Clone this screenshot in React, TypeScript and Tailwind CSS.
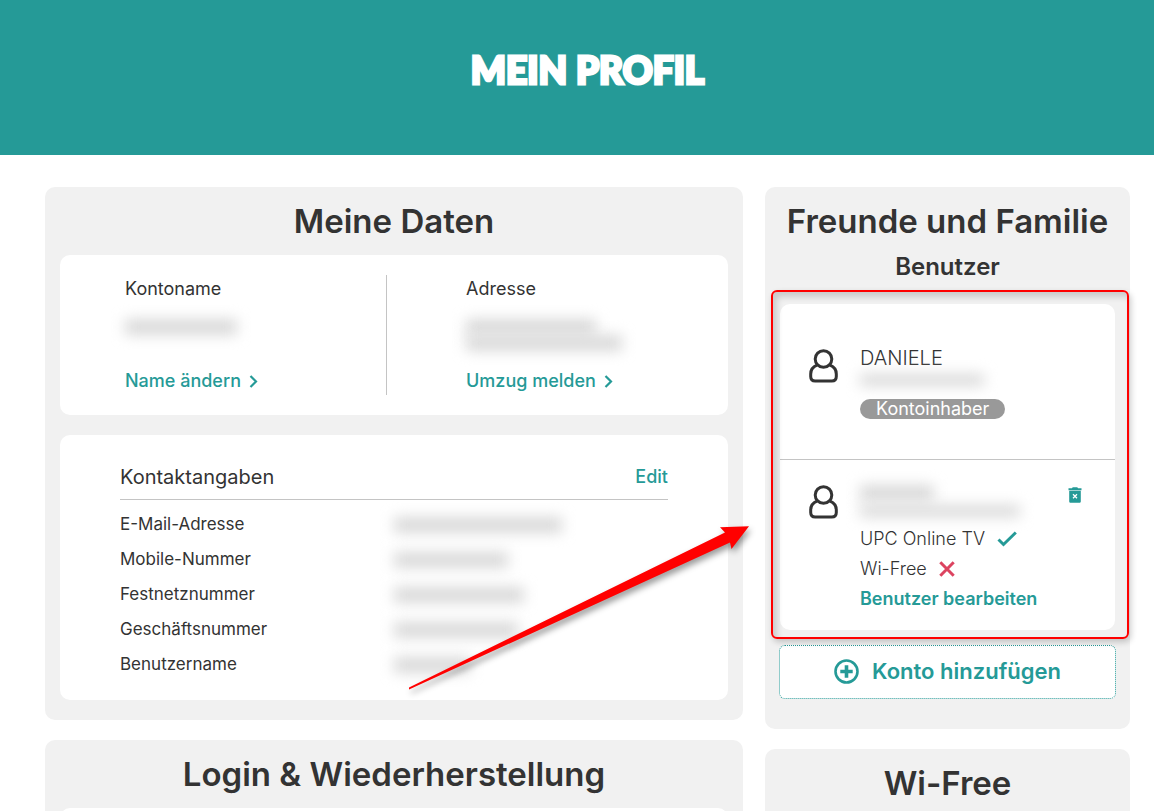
import type { ReactNode } from "react";

const contactRows = [
  { label: "E-Mail-Adresse", width: "w-[168px]" },
  { label: "Mobile-Nummer", width: "w-[114px]" },
  { label: "Festnetznummer", width: "w-[130px]" },
  { label: "Geschäftsnummer", width: "w-[124px]" },
  { label: "Benutzername", width: "w-[76px]" },
];

function Panel({ title, children }: { title: string; children?: ReactNode }) {
  return (
    <section className="relative rounded-[10px] bg-[#f1f1f1] px-[15px]">
      <h2 className="py-4 text-center text-[33px] leading-9 font-semibold whitespace-nowrap">
        {title}
      </h2>
      {children}
    </section>
  );
}

function ChevronIcon() {
  return (
    <svg width="9" height="14" viewBox="0 0 9 14" fill="none" className="shrink-0">
      <path d="M1.500 2l5.500 5.500L1.500 13" stroke="currentColor" strokeWidth="2.200" />
    </svg>
  );
}

function PersonIcon() {
  return (
    <svg
      width="30"
      height="34"
      viewBox="0 0 30 34"
      fill="none"
      stroke="currentColor"
      strokeWidth="3"
      className="shrink-0">
      <circle cx="14.5" cy="10" r="8.3" />
      <path d="M8 16.200C4 17.800 1.700 21 1.700 25v2.500c0 3 1.500 4.500 4.500 4.500h16.600c3 0 4.500-1.500 4.500-4.500V25c0-4-2.300-7.200-6.300-8.800" />
    </svg>
  );
}

function TrashIcon() {
  return (
    <svg width="14" height="16" viewBox="0 0 14 16" fill="none">
      <path d="M0.500 1.300H4L4.700 0.300h4.600L10 1.300h3.500v1.900H0.500z" fill="currentColor" />
      <path d="M1.200 3.700h11.600v10.500c0 1-.6 1.600-1.600 1.600H2.800c-1 0-1.600-.6-1.600-1.600z" fill="currentColor" />
      <path d="M5 7.300l4 4M9 7.300l-4 4" stroke="#fff" strokeWidth="1.300" />
    </svg>
  );
}

function CheckIcon() {
  return (
    <svg width="20" height="16" viewBox="0 0 20 16" fill="none">
      <path d="M1.500 8.500l5 5L18.800 1.500" stroke="#259a97" strokeWidth="3" />
    </svg>
  );
}

function CrossIcon() {
  return (
    <svg width="16" height="16" viewBox="0 0 16 16" fill="none">
      <path d="M1.300 1.300l13.400 13.400M14.700 1.300L1.300 14.700" stroke="#dc4460" strokeWidth="3" />
    </svg>
  );
}

function PlusIcon() {
  return (
    <svg width="25" height="25" viewBox="0 0 25 25" fill="none" stroke="currentColor">
      <circle cx="12.500" cy="12.500" r="11" strokeWidth="2.600" />
      <path d="M12.500 6.300v12.400M6.300 12.500h12.400" strokeWidth="3.600" />
    </svg>
  );
}

/* Private data is hidden behind a soft grey smudge */
function Redacted({ className }: { className: string }) {
  return <div aria-hidden="true" className={`bg-[#d9d9d9] blur-[7px] ${className}`} />;
}

function Arrow() {
  return (
    <svg
      aria-hidden="true"
      width="355"
      height="185"
      viewBox="0 0 355 185"
      className="pointer-events-none absolute top-[328px] left-[360px] z-10 drop-shadow-[2px_4px_3px_rgba(0,0,0,0.4)]">
      <path d="M4 172.500L320 17.500 315 12.300 344 11.300 326.500 34 325 27.500 4 174.500z" fill="#f00" />
    </svg>
  );
}

export default function App() {
  return (
    <div className="min-h-screen bg-white font-['Inter',sans-serif] text-[#333]">
      <header className="bg-[#259a97] pt-[46px] pr-6 pb-[61px] pl-[45px]">
        <h1 className="text-center font-['Lato',sans-serif] text-[37px] leading-[48px] font-black text-white [-webkit-text-stroke:3px_white]">
          MEIN PROFIL
        </h1>
      </header>

      <main className="grid grid-cols-[698fr_365fr] items-start gap-[22px] pt-8 pr-6 pl-[45px]">
        <div className="flex min-w-0 flex-col gap-5">
          <Panel title="Meine Daten">
            <div className="flex flex-col gap-5 pb-5">
              <div className="grid grid-cols-[327fr_341fr] rounded-[10px] bg-white py-5 text-lg leading-7">
                <div className="flex h-[120px] flex-col border-r border-[#c4c4c4] pl-[65px]">
                  <h3>Kontoname</h3>
                  <Redacted className="mt-4 h-4 w-[112px]" />
                  <a href="#name" className="mt-auto flex items-center gap-2 font-medium text-[#259a97]">
                    Name ändern <ChevronIcon />
                  </a>
                </div>
                <div className="flex h-[120px] flex-col pl-[79px]">
                  <h3>Adresse</h3>
                  <Redacted className="mt-4 h-4 w-[130px]" />
                  <Redacted className="h-4 w-[156px]" />
                  <a href="#umzug" className="mt-auto flex items-center gap-2 font-medium text-[#259a97]">
                    Umzug melden <ChevronIcon />
                  </a>
                </div>
              </div>

              <div className="rounded-[10px] bg-white px-[60px] pt-7 pb-[18px]">
                <div className="mb-[7px] flex items-center justify-between border-b border-[#c4c4c4] pb-2">
                  <h3 className="text-xl leading-7">Kontaktangaben</h3>
                  <a href="#edit" className="text-lg leading-7 font-medium text-[#259a97]">
                    Edit
                  </a>
                </div>
                <dl className="text-[17px] leading-[35px]">
                  {contactRows.map((row) => (
                    <div key={row.label} className="grid grid-cols-2 items-center">
                      <dt>{row.label}</dt>
                      <dd>
                        <Redacted className={`h-4 ${row.width}`} />
                      </dd>
                    </div>
                  ))}
                </dl>
              </div>
            </div>
            <Arrow />
          </Panel>

          <Panel title="Login & Wiederherstellung">
            <div className="h-40 rounded-[10px] bg-white" />
          </Panel>
        </div>

        <div className="flex min-w-0 flex-col gap-5">
          <Panel title="Freunde und Familie">
            <h3 className="mb-[21px] -mt-1 text-center text-2xl leading-8 font-semibold">Benutzer</h3>
            <div className="relative rounded-[10px] bg-white">
              <div className="flex gap-[21px] border-b border-[#c4c4c4] px-[29px] pt-[45px] pb-10">
                <PersonIcon />
                <div className="leading-[18px]">
                  <p className="text-xl leading-[18px] font-light">DANIELE</p>
                  <Redacted className="mt-[7px] mb-[13px] h-3 w-[124px]" />
                  <span className="inline-block rounded-full bg-[#999] px-4 text-lg leading-5 text-white">
                    Kontoinhaber
                  </span>
                </div>
              </div>
              <div className="flex gap-[21px] pt-[25px] pr-[33px] pb-4 pl-[29px]">
                <PersonIcon />
                <div className="flex-1 text-lg leading-[30px]">
                  <Redacted className="h-4 w-[74px]" />
                  <Redacted className="mt-1 mb-[7px] h-3 w-[160px]" />
                  <p className="flex items-center gap-3 font-light">
                    UPC Online TV <CheckIcon />
                  </p>
                  <p className="flex items-center gap-3 font-light">
                    Wi-Free <CrossIcon />
                  </p>
                  <a href="#bearbeiten" className="font-semibold text-[#259a97]">
                    Benutzer bearbeiten
                  </a>
                </div>
                <button type="button" aria-label="Benutzer löschen" className="mt-0.5 self-start text-[#259a97]">
                  <TrashIcon />
                </button>
              </div>
              <div className="pointer-events-none absolute -top-[14px] -right-[14px] -bottom-[9px] -left-[9px] rounded-md border-2 border-[#f00] shadow-[2px_3px_6px_rgba(0,0,0,0.2),inset_4px_5px_6px_rgba(0,0,0,0.16)]" />
            </div>
            <div className="-mx-px pt-[15px] pb-[30px]">
              <button
                type="button"
                className="flex h-[54px] w-full items-center justify-center gap-[13px] rounded-md border border-dotted border-[#259a97] bg-white pb-0.5 text-[22px] font-semibold text-[#259a97]">
                <PlusIcon />
                Konto hinzufügen
              </button>
            </div>
          </Panel>

          <Panel title="Wi-Free">
            <div className="h-40" />
          </Panel>
        </div>
      </main>
    </div>
  );
}
